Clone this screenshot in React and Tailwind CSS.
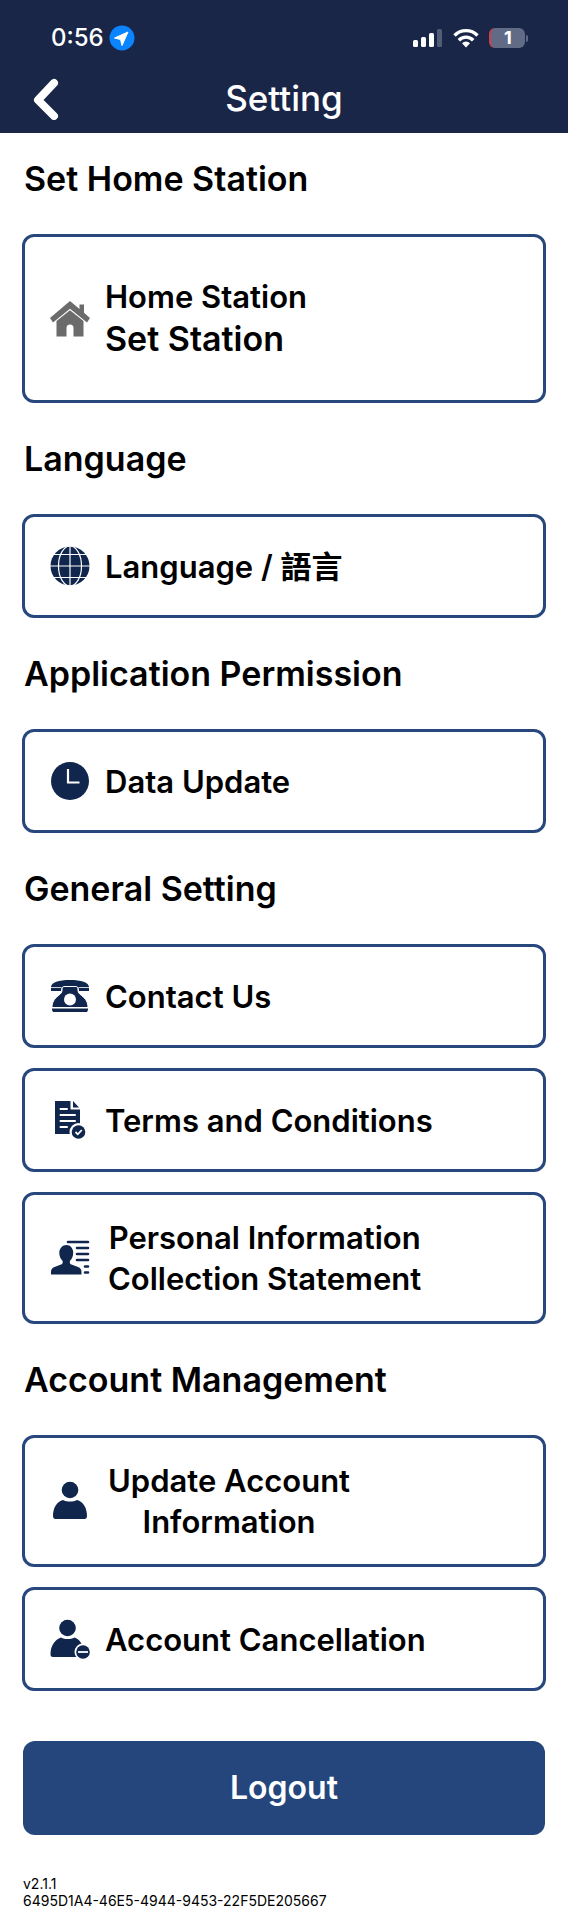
import React from "react";

const NAVY = "#10264d";

function HomeIcon() {
  return (
    <svg viewBox="0 0 40 40" className="w-10 h-10" fill="#6b6b6b" aria-hidden="true">
      <path d="M20 2 0 19l3 4.500L20 9.800l17 13.700 3-4.500-6-5.200V5.500h-4.500V10z" />
      <path d="M20 11.300 6.500 22v15.500h10V29a3.500 3.500 0 0 1 7 0v8.500h10V22z" />
    </svg>
  );
}

function GlobeIcon() {
  return (
    <svg viewBox="0 0 40 40" className="w-10 h-10" aria-hidden="true">
      <circle cx="20" cy="20" r="19.500" fill={NAVY} />
      <g fill="none" stroke="#fff" strokeWidth="1.200">
        <path d="M20 0v40M0 20h40M3 8.500h34M3 31.500h34" />
        <ellipse cx="20" cy="20" rx="11.500" ry="20" />
      </g>
    </svg>
  );
}

function ClockIcon() {
  return (
    <svg viewBox="0 0 40 40" className="w-10 h-10" aria-hidden="true">
      <circle cx="20" cy="20" r="19" fill={NAVY} />
      <path d="M18 8v13.500h11.500" fill="none" stroke="#fff" strokeWidth="2.200" />
    </svg>
  );
}

function PhoneIcon() {
  return (
    <svg viewBox="0 0 40 40" className="w-10 h-10" aria-hidden="true">
      <path
        d="M20 4C9 4 1 6.500 1 11v4h10c0-3 1-4.500 3-4.500h12c2 0 3 1.500 3 4.500h10v-4c0-4.500-8-7-19-7z"
        fill={NAVY}
      />
      <path
        d="M15 10.500h10c2.500 0 3 1 3 3.500s1 3.500 3.500 5.500c4.500 3.500 6.500 7 6.500 12H2c0-5 2-8.500 6.500-12C11 17.500 12 16.500 12 14s.5-3.500 3-3.500z"
        fill={NAVY}
        stroke="#fff"
        strokeWidth="1"
      />
      <path d="M2 32.500h36v1.500l-1 2H3l-1-2z" fill={NAVY} />
      <path d="M1 11.500h10.500M28.500 11.500H39" stroke="#fff" strokeWidth=".8" />
      <circle cx="20" cy="23.500" r="6" fill="#fff" />
    </svg>
  );
}

function TermsIcon() {
  return (
    <svg viewBox="0 0 40 40" className="w-10 h-10" aria-hidden="true">
      <path d="M5 1h15.500v8.500H30V34H5z" fill={NAVY} />
      <path d="M23 1v6.500h6z" fill={NAVY} />
      <path
        d="M10.500 9H17M10.500 15H25M10.500 21H25M10.500 27H17"
        stroke="#fff"
        strokeWidth="2"
        strokeLinecap="round"
      />
      <circle cx="28.500" cy="32" r="9" fill="#fff" />
      <circle cx="28.500" cy="32" r="6.800" fill={NAVY} />
      <path d="m25.500 32 2.300 2.300 4-4.300" fill="none" stroke="#fff" strokeWidth="1.800" />
    </svg>
  );
}

function StatementIcon() {
  return (
    <svg viewBox="0 0 40 40" className="w-10 h-10" aria-hidden="true">
      <path
        d="M16.500 7c4 0 6.700 3.300 6.700 8 0 3.500-1.700 6.300-3.200 7.800-.5 2.200 0 3 1.500 3.700l6.500 2.500c2.500 1 3.500 2.500 3.500 5v2.500H1V34c0-2.500 1-4 3.500-5l6.500-2.500c1.500-.7 2-1.500 1.500-3.700-1.500-1.500-3.200-4.300-3.200-7.800 0-4.700 3.200-8 7.200-8z"
        fill={NAVY}
      />
      <path
        d="M18 4h20M27 10h11M27 16h11M27 22h11M35 28.500h3M35 34.500h3"
        stroke={NAVY}
        strokeWidth="2.600"
        strokeLinecap="round"
      />
    </svg>
  );
}

function UserIcon() {
  return (
    <svg viewBox="0 0 40 40" className="w-10 h-10" fill={NAVY} aria-hidden="true">
      <circle cx="20" cy="9" r="8.300" />
      <path d="M13 19c2 1 4.500 1.500 7 1.500s5-.5 7-1.500c6 1.500 10 7.500 10 16 0 2-1 3-2.500 3h-29C4 38 3 37 3 35c0-8.500 4-14.500 10-16z" />
    </svg>
  );
}

function CancelUserIcon() {
  return (
    <svg viewBox="0 0 40 40" className="w-10 h-10" aria-hidden="true">
      <circle cx="17.500" cy="9" r="8.300" fill={NAVY} />
      <path
        d="M11 18.500c2 1 4 1.500 6.500 1.500s5-.5 7-1.500c6 2 9.500 8 9.500 19.500H3c-1.500 0-2.500-.8-2.500-2.500 0-9 4.500-15 10.500-17z"
        fill={NAVY}
      />
      <circle cx="33" cy="33" r="8.500" fill="#fff" />
      <circle cx="33" cy="33" r="6.800" fill={NAVY} />
      <path d="M28 33h10" stroke="#fff" strokeWidth="1.800" />
    </svg>
  );
}

const sections = [
  {
    title: "Set Home Station",
    items: [{ label: "Home Station", value: "Set Station", icon: HomeIcon }],
  },
  {
    title: "Language",
    items: [{ label: "Language / 語言", icon: GlobeIcon }],
  },
  {
    title: "Application Permission",
    items: [{ label: "Data Update", icon: ClockIcon }],
  },
  {
    title: "General Setting",
    items: [
      { label: "Contact Us", icon: PhoneIcon },
      { label: "Terms and Conditions", icon: TermsIcon },
      { label: "Personal Information\nCollection Statement", icon: StatementIcon },
    ],
  },
  {
    title: "Account Management",
    items: [
      { label: "Update Account\nInformation", icon: UserIcon },
      { label: "Account Cancellation", icon: CancelUserIcon },
    ],
  },
];

function StatusBar() {
  return (
    <div className="flex items-center justify-between h-[76px] pl-[51px] pr-10">
      <div className="flex items-center gap-[5px]">
        <span className="text-[24px] leading-[28px] font-medium">0:56</span>
        <svg viewBox="0 0 26 26" className="w-[26px] h-[26px]" aria-hidden="true">
          <circle cx="13" cy="13" r="12.500" fill="#0a84ff" />
          <path d="M19 7 5.500 13l6 1.500L13 20.500z" fill="#fff" stroke="#fff" strokeLinejoin="round" />
        </svg>
      </div>
      <div className="flex items-center gap-[10px]">
        <svg viewBox="0 0 30 20" className="w-[30px] h-5" fill="#fff" aria-hidden="true">
          <rect x="0" y="12" width="5" height="7" rx="1.500" />
          <rect x="8" y="9" width="5" height="10" rx="1.500" />
          <rect x="16" y="5" width="5" height="14" rx="1.500" />
          <rect x="24" y="1" width="5" height="18" rx="1.500" opacity=".25" />
        </svg>
        <svg viewBox="0 0 26 20" className="w-[26px] h-5" aria-hidden="true">
          <g fill="none" stroke="#fff" strokeWidth="3.400">
            <path d="M1.500 7.500a16 16 0 0 1 23 0" />
            <path d="M5.800 12.200a10 10 0 0 1 14.400 0" />
          </g>
          <path d="M13 19.500l-4-4.300a5.500 5.500 0 0 1 8 0z" fill="#fff" />
        </svg>
        <div className="flex items-center gap-px">
          <div className="flex justify-center w-9 h-5 rounded-md border-l-2 border-[#d04048] bg-[#626b85]">
            <span className="text-[18px] leading-5 font-bold">1</span>
          </div>
          <div className="w-[2px] h-[7px] rounded-r bg-[#626b85]" />
        </div>
      </div>
    </div>
  );
}

function SettingItem({ item }) {
  const Icon = item.icon;
  const multiline = item.label.includes("\n");

  return (
    <button
      type="button"
      className={`flex items-center gap-[15px] w-full min-h-[104px] px-[25px] text-left border-[3px] border-[#28487d] rounded-xl bg-white ${
        item.value ? "py-[39px]" : "py-[22px]"
      }`}
    >
      <span className="shrink-0">
        <Icon />
      </span>
      <span className="font-semibold">
        <span
          className={`block text-[31px] leading-[41px] ${
            multiline ? "px-[3px] text-center whitespace-pre-line" : ""
          }`}
        >
          {item.label}
        </span>
        {item.value && (
          <span className="block text-[34px] leading-[44px]">{item.value}</span>
        )}
      </span>
    </button>
  );
}

export default function App() {
  return (
    <div className="min-h-screen bg-white text-black font-[Inter,'Noto_Sans_CJK_TC',sans-serif]">
      <header className="bg-[#192648] text-white">
        <StatusBar />
        <div className="grid grid-cols-[1fr_auto_1fr] items-center h-[57px] pb-[14px] px-[30px]">
          <button type="button" aria-label="Back" className="justify-self-start">
            <svg viewBox="0 0 30 44" className="w-[30px] h-11" aria-hidden="true">
              <path
                d="M24 7 8 24l16 16"
                fill="none"
                stroke="#fff"
                strokeWidth="8"
                strokeLinecap="round"
                strokeLinejoin="round"
              />
            </svg>
          </button>
          <h1 className="text-[35px] leading-[40px] font-medium">Setting</h1>
        </div>
      </header>

      <main className="px-[22px] pt-[26px]">
        {sections.map((section) => (
          <section key={section.title} className="mb-9">
            <h2 className="pl-[2px] mb-[35px] text-[34px] leading-[40px] font-semibold">
              {section.title}
            </h2>
            <div className="flex flex-col gap-5">
              {section.items.map((item) => (
                <SettingItem key={item.label} item={item} />
              ))}
            </div>
          </section>
        ))}

        <div className="mt-[50px] px-px">
          <button
            type="button"
            className="w-full h-[94px] rounded-xl bg-[#24467c] text-white text-[32px] leading-[40px] font-semibold"
          >
            Logout
          </button>
        </div>

        <footer className="pl-px pt-10 pb-4 text-[14px] leading-[17px]">
          <p>v2.1.1</p>
          <p>6495D1A4-46E5-4944-9453-22F5DE205667</p>
        </footer>
      </main>
    </div>
  );
}
